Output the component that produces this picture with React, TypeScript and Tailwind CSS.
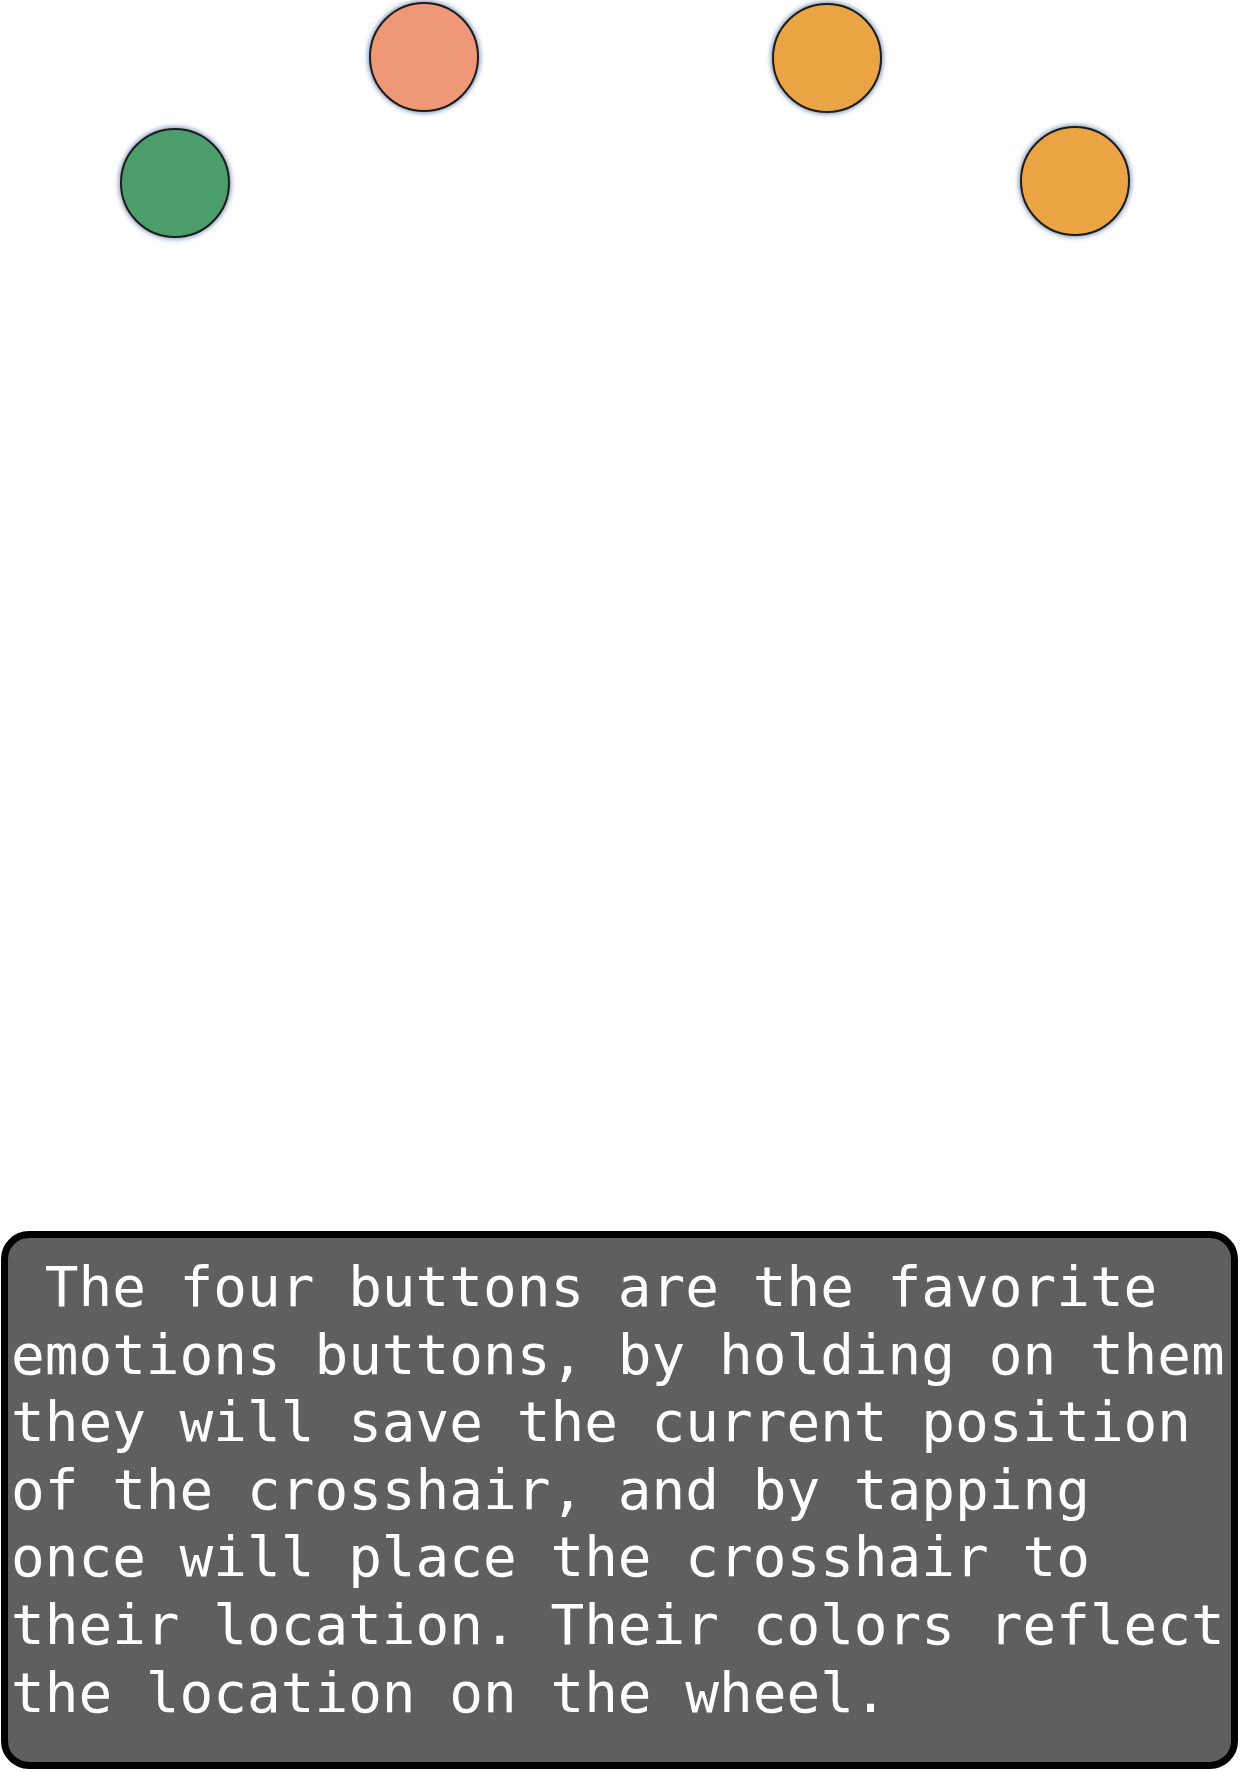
import React from 'react';

// Favorite emotion buttons (positions on the wheel canvas)
const favorites = [
  { id: 'green', left: 120, top: 128, color: 'bg-[#4b9d6c]' },
  { id: 'salmon', left: 369, top: 2, color: 'bg-[#ee9878]' },
  { id: 'orange-1', left: 772, top: 3, color: 'bg-[#eaa443]' },
  { id: 'orange-2', left: 1020, top: 126, color: 'bg-[#eaa443]' },
];

function FavoriteButton({ left, top, color }: { left: number; top: number; color: string }) {
  return (
    <button
      className={`absolute w-[110px] h-[110px] rounded-full border-2 border-[#1c1c1c] shadow-[0_0_5px_1px_rgba(60,90,140,0.7)] ${color}`}
      style={{ left, top }}
    />
  );
}

export default function App() {
  return (
    <div className="w-[1240px] h-[1772px] bg-white flex flex-col">
      {/* Wheel area */}
      <div className="relative flex-1">
        {favorites.map((f) => (
          <FavoriteButton key={f.id} left={f.left} top={f.top} color={f.color} />
        ))}
      </div>

      {/* Help tooltip */}
      <div className="ml-[1px] mb-[3px] w-[1237px] h-[538px] rounded-[28px] border-[7px] border-black bg-[#5f5f5f] pl-[3px] pr-[1px] pt-[15px]">
        <p
          className="whitespace-pre-wrap text-white text-[56px] leading-[67.6px]"
          style={{ fontFamily: '"DejaVu Sans Mono", monospace' }}
        >
          {' The four buttons are the favorite emotions buttons, by holding on them they will save the current position of the crosshair, and by tapping once will place the crosshair to their location. Their colors reflect the location on the wheel.'}
        </p>
      </div>
    </div>
  );
}
